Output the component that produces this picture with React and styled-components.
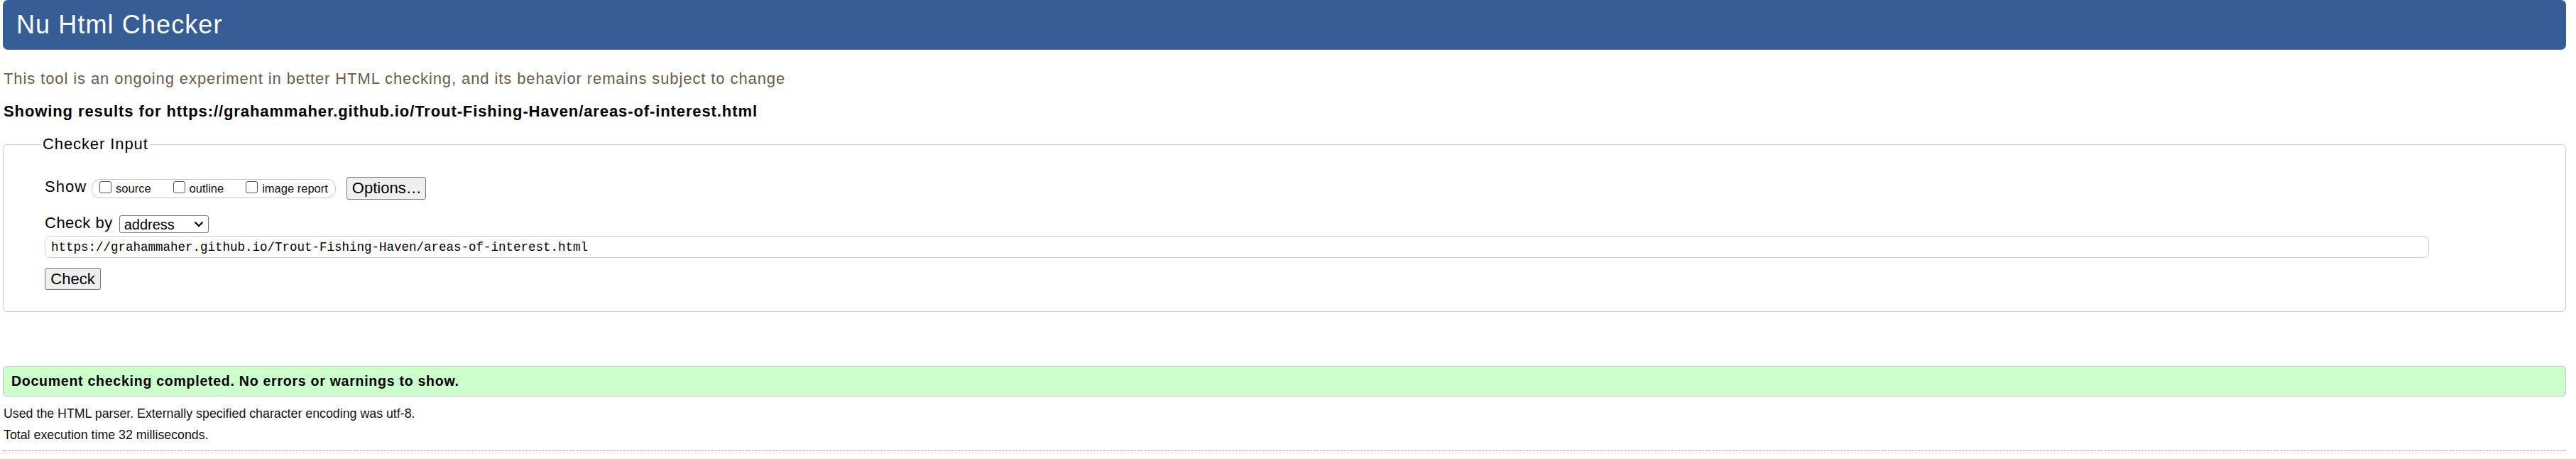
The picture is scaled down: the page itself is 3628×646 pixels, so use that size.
import React from 'react';
import styled, { createGlobalStyle } from 'styled-components';

const GlobalStyle = createGlobalStyle`
  html, body {
    margin: 0;
    padding: 0;
    background: #fff;
  }
  body {
    font-family: "Liberation Sans", Arial, sans-serif;
    color: #000;
  }
`;

const Page = styled.div`
  padding: 0 14px 0 4px;
  height: 646px;
  overflow: hidden;
`;

const Header = styled.h1`
  margin: 0;
  height: 70px;
  line-height: 70px;
  padding: 0 0 0 19px;
  background: #365d95;
  color: #fff;
  font-size: 36px;
  font-weight: normal;
  letter-spacing: 1.1px;
  border-radius: 7px;
`;

const Intro = styled.p`
  margin: 28px 0 0 1px;
  font-size: 22px;
  line-height: 26px;
  letter-spacing: 0.9px;
  color: #6b5b4c;
`;

const Showing = styled.p`
  margin: 20px 0 0 1px;
  font-size: 22px;
  line-height: 26px;
  letter-spacing: 0.9px;
  font-weight: bold;
`;

const Fieldset = styled.fieldset`
  margin: 20px 0 0;
  padding: 0 20px 30px 58px;
  border: 1px solid #cccccc;
  border-radius: 6px;
  min-width: 0;
`;

const Legend = styled.legend`
  margin-left: -5px;
  padding: 0 2px;
  font-size: 22px;
  line-height: 26px;
  letter-spacing: 0.9px;
`;

const Row = styled.div`
  display: flex;
  align-items: center;
  gap: ${p => p.gap || 0}px;
  margin-top: ${p => p.top || 0}px;
`;

const Label = styled.span`
  align-self: flex-start;
  margin-top: ${p => p.shift || 0}px;
  font-size: 22px;
  line-height: 26px;
  letter-spacing: ${p => p.spacing || 0}px;
`;

const Group = styled.div`
  display: flex;
  align-items: center;
  height: 25px;
  padding: 0 10px 0 10px;
  border: 1px solid #c8c8c8;
  border-radius: 12px;
  gap: 31px;
`;

const Choice = styled.label`
  display: flex;
  align-items: flex-end;
  font-size: 16.5px;
  line-height: 20px;
  color: #111;
`;

const Box = styled.input.attrs({ type: 'checkbox' })`
  appearance: none;
  width: 17px;
  height: 17px;
  margin: 0 6px 3px 0;
  border: 1px solid #555;
  border-radius: 3px;
  background: #fff;
  box-sizing: border-box;
`;

const Button = styled.button`
  height: ${p => p.h || 32}px;
  width: ${p => p.w}px;
  margin-left: ${p => p.left || 0}px;
  padding: 0 7px;
  font-family: "Liberation Sans", Arial, sans-serif;
  font-size: 22px;
  color: #000;
  background: #efefef;
  border: 1px solid #767676;
  border-radius: 3px;
`;

const SelectWrap = styled.div`
  position: relative;
  width: 126px;
  height: 25px;
`;

const Select = styled.select`
  appearance: none;
  width: 100%;
  height: 100%;
  padding: 0 0 0 6px;
  font-family: "Liberation Sans", Arial, sans-serif;
  font-size: 20px;
  color: #000;
  background: #fff;
  border: 1px solid #767676;
  border-radius: 3px;
`;

const Chevron = styled.svg`
  position: absolute;
  right: 7px;
  top: 8px;
  pointer-events: none;
`;

const UrlInput = styled.input`
  display: block;
  box-sizing: border-box;
  width: 3358px;
  height: 31px;
  margin-top: 4px;
  padding: 0 8px;
  font-family: "Liberation Mono", "DejaVu Sans Mono", monospace;
  font-size: 17.5px;
  color: #000;
  border: 1px solid #cfcfcf;
  border-radius: 8px;
  outline: none;
`;

const Success = styled.p`
  margin: 76px 0 0;
  height: 41px;
  line-height: 41px;
  padding: 0 11px;
  background: #ccffcc;
  border: 1px solid #c3c3c3;
  border-radius: 6px;
  font-size: 19.5px;
  letter-spacing: 0.75px;
  font-weight: bold;
`;

const Stat = styled.p`
  margin: ${p => p.top}px 0 0 1px;
  font-size: 17.8px;
  line-height: 22px;
  color: #111;
`;

const Rule = styled.hr`
  margin: 11px 0 0;
  border: 0;
  border-top: 1px dotted #888;
`;

export default function App() {
  const url = 'https://grahammaher.github.io/Trout-Fishing-Haven/areas-of-interest.html';
  return (
    <>
      <GlobalStyle />
      <Page>
        <Header>Nu Html Checker</Header>
        <Intro>This tool is an ongoing experiment in better HTML checking, and its behavior remains subject to change</Intro>
        <Showing>Showing results for {url}</Showing>
        <Fieldset>
          <Legend>Checker Input</Legend>
          <Row top={33} gap={7}>
            <Label shift={1} spacing={1}>Show</Label>
            <Group>
              <Choice><Box />source</Choice>
              <Choice><Box />outline</Choice>
              <Choice><Box />image report</Choice>
            </Group>
            <Button w={112} left={8}>Options…</Button>
          </Row>
          <Row top={22} gap={9}>
            <Label shift={-2} spacing={0.5}>Check by</Label>
            <SelectWrap>
              <Select defaultValue="address">
                <option value="address">address</option>
                <option value="file">file upload</option>
                <option value="textarea">text input</option>
              </Select>
              <Chevron width="14" height="9" viewBox="0 0 14 9">
                <path d="M1.5 1.5 L7 7 L12.5 1.5" fill="none" stroke="#000" strokeWidth="2.2" />
              </Chevron>
            </SelectWrap>
          </Row>
          <UrlInput readOnly value={url} />
          <Row top={14}>
            <Button w={79} h={31}>Check</Button>
          </Row>
        </Fieldset>
        <Success>Document checking completed. No errors or warnings to show.</Success>
        <Stat top={13}>Used the HTML parser. Externally specified character encoding was utf-8.</Stat>
        <Stat top={8}>Total execution time 32 milliseconds.</Stat>
        <Rule />
      </Page>
    </>
  );
}
